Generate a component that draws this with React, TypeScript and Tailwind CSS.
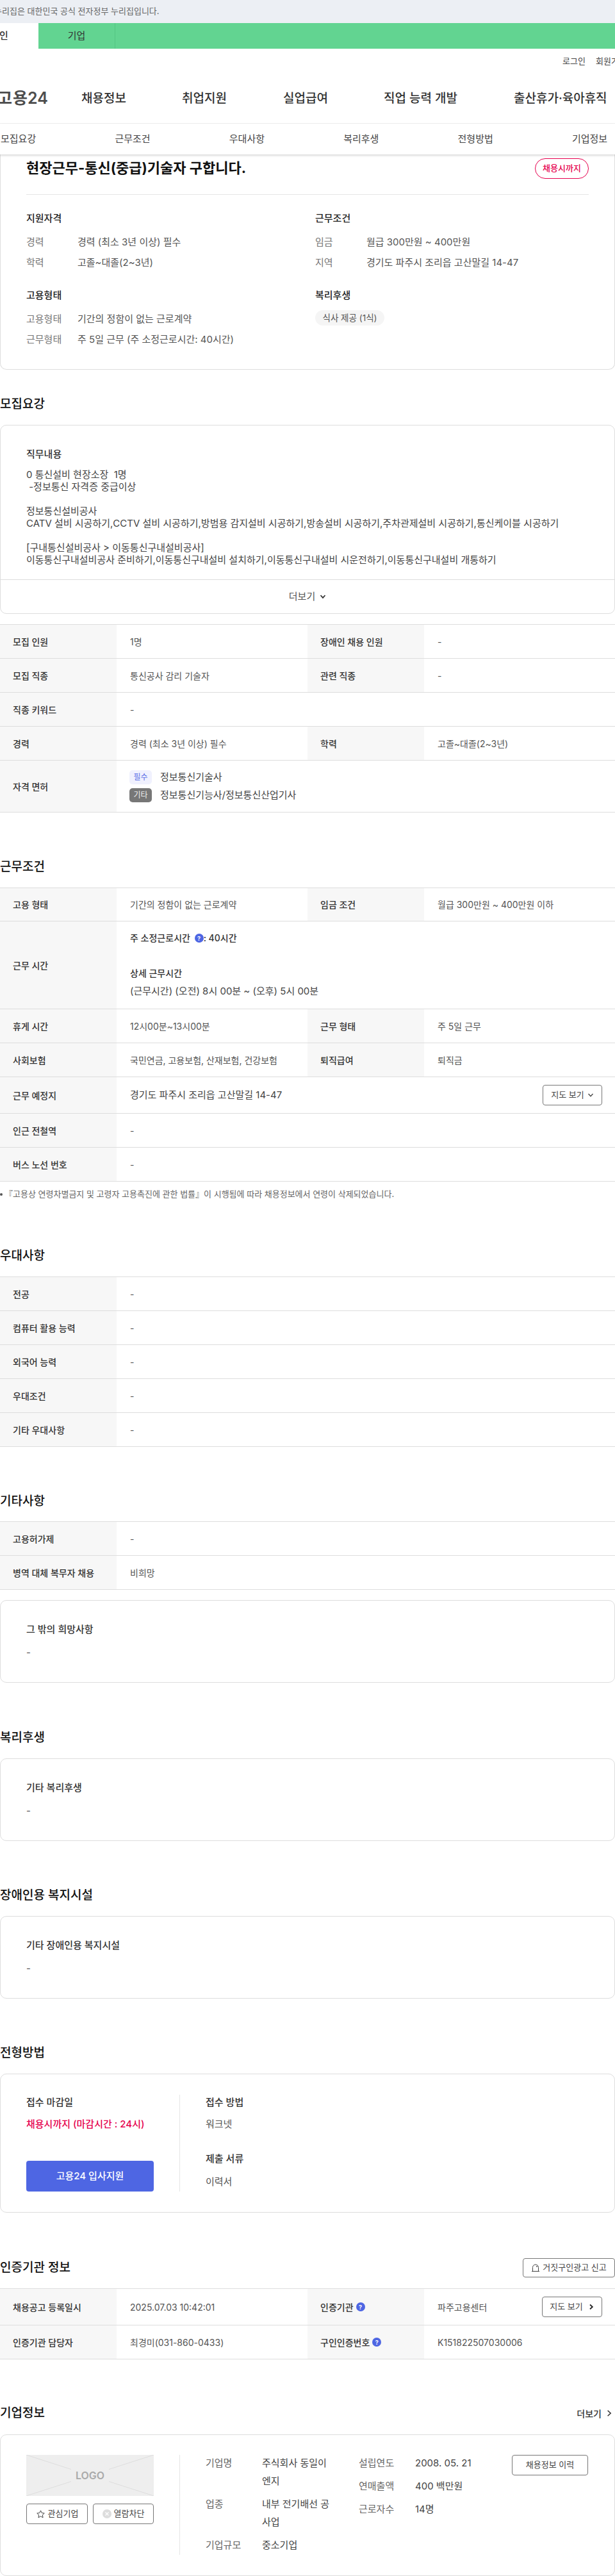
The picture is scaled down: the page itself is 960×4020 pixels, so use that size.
import React from "react";

const Q = () => (
  <span className="inline-flex h-[14px] w-[14px] items-center justify-center rounded-full bg-[#4e66e3] text-[9px] font-bold leading-none text-white">?</span>
);

const Chev = ({ dir = "down", cls = "", sw = 1.3, size = 10 }: { dir?: "down" | "right"; cls?: string; sw?: number; size?: number }) => (
  <svg width={size} height={size} viewBox="0 0 10 10" fill="none" stroke="currentColor" strokeWidth={sw} className={cls}>
    {dir === "down" ? <path d="M1.5 3 5 6.8 8.5 3" /> : <path d="M3 1.5 6.8 5 3 8.5" />}
  </svg>
);

const Label = ({ children }: { children: React.ReactNode }) => (
  <div className="flex w-[182px] shrink-0 items-center bg-[#f7f7f7] pl-[20px] text-[14px] font-medium text-[#333]">{children}</div>
);

const Val = ({ children, cls = "" }: { children?: React.ReactNode; cls?: string }) => (
  <div className={`flex items-center pl-[21px] text-[14px] text-[#555] ${cls}`}>{children}</div>
);

const Row2 = ({ a, b, c, d, h = "h-[53px]" }: { a: string; b: React.ReactNode; c: React.ReactNode; d: React.ReactNode; h?: string }) => (
  <div className={`flex border-b border-[#ddd] ${h}`}>
    <Label>{a}</Label>
    <Val cls="w-[298px]">{b}</Val>
    <Label>{c}</Label>
    <Val cls="flex-1">{d}</Val>
  </div>
);

const Row1 = ({ a, b, h = "h-[53px]" }: { a: string; b: React.ReactNode; h?: string }) => (
  <div className={`flex border-b border-[#ddd] ${h}`}>
    <Label>{a}</Label>
    <Val cls="flex-1">{b}</Val>
  </div>
);

const Heading = ({ children, cls = "" }: { children: React.ReactNode; cls?: string }) => (
  <h2 className={`text-[19px] leading-[32px] font-medium text-[#111] ${cls}`}>{children}</h2>
);

const NoteCard = ({ title }: { title: string }) => (
  <div className="h-[129px] rounded-[10px] border border-[#ddd] px-[40px] pt-[33px]">
    <div className="text-[15px] leading-[24px] font-medium text-[#333]">{title}</div>
    <div className="mt-[12px] text-[15px] leading-[24px] text-[#555]">-</div>
  </div>
);

const SumRow = ({ k, v, cls = "" }: { k: string; v: string; cls?: string }) => (
  <div className={`flex h-[32px] items-center text-[15px] text-[#555] ${cls}`}>
    <span className="w-[80px] text-[#777]">{k}</span>
    {v}
  </div>
);

const Info = ({ k, v, cls = "" }: { k: string; v: string; cls?: string }) => (
  <div className={`flex ${cls}`}>
    <span className="w-[88px] shrink-0 text-[#666]">{k}</span>
    <span className="w-[110px] break-all text-[#444]">{v}</span>
  </div>
);

export default function App() {
  return (
    <div className="h-[4020px] w-[960px] overflow-hidden bg-white font-['Inter','Noto_Sans_CJK_KR',sans-serif] text-[#333]">
      <div className="flex h-[36px] items-center whitespace-nowrap bg-[#eceff4] text-[13px] text-[#666]">
        <span className="ml-[-9px]">누리집은 대한민국 공식 전자정부 누리집입니다.</span>
      </div>
      <div className="flex h-[40px] bg-[#62d491] text-[15px] text-[#333]">
        <div className="flex w-[60px] items-center bg-white">
          <span className="ml-[-1px] font-medium">인</span>
        </div>
        <div className="flex w-[120px] items-center justify-center border-r border-[#55c584]">기업</div>
      </div>
      <div className="flex h-[40px] items-center overflow-hidden whitespace-nowrap pl-[878px] text-[13px] text-[#444]">
        <span className="w-[52px] shrink-0">로그인</span>
        <span className="shrink-0">회원가입</span>
      </div>
      <div className="flex h-[77px] items-center whitespace-nowrap border-b border-[#eee] text-[19px] font-medium text-[#333]">
        <span className="ml-[-4px] w-[131px] shrink-0 text-[25px] font-semibold text-[#4d4d4d]">
          <span className="tracking-[1px]">고</span>용24
        </span>
        <span className="w-[157px] shrink-0">채용정보</span>
        <span className="w-[158px] shrink-0">취업지원</span>
        <span className="w-[157px] shrink-0">실업급여</span>
        <span className="w-[203px] shrink-0">직업 능력 개발</span>
        <span className="shrink-0">출산휴가·육아휴직</span>
      </div>
      <div className="relative z-10 flex h-[48px] items-center whitespace-nowrap bg-white pl-[1px] text-[15px] text-[#444] shadow-[0_2px_3px_rgba(0,0,0,0.15)]">
        {["모집요강", "근무조건", "우대사항", "복리후생", "전형방법", "기업정보"].map((t) => (
          <span key={t} className="w-[178.4px] shrink-0">{t}</span>
        ))}
      </div>

      <div className="h-[336px] rounded-b-[10px] border border-t-0 border-[#ddd] px-[40px]">
        <div className="flex h-[63px] items-start justify-between border-b border-[#e5e5e5]">
          <h1 className="text-[22px] leading-[42px] font-bold text-[#111]">현장근무-통신(중급)기술자 구합니다.</h1>
          <span className="mt-[6px] flex h-[32px] w-[84px] items-center justify-center rounded-full border border-[#e6004e] text-[13px] font-medium text-[#e6004e]">채용시까지</span>
        </div>
        <div className="grid grid-cols-[451px_1fr]">
          <div>
            <div className="mt-[25px] text-[15px] leading-[24px] font-medium text-[#222]">지원자격</div>
            <SumRow k="경력" v="경력 (최소 3년 이상) 필수" cls="mt-[9px]" />
            <SumRow k="학력" v="고졸~대졸(2~3년)" />
            <div className="mt-[23px] text-[15px] leading-[24px] font-medium text-[#222]">고용형태</div>
            <SumRow k="고용형태" v="기간의 정함이 없는 근로계약" cls="mt-[9px]" />
            <SumRow k="근무형태" v="주 5일 근무 (주 소정근로시간: 40시간)" />
          </div>
          <div>
            <div className="mt-[25px] text-[15px] leading-[24px] font-medium text-[#222]">근무조건</div>
            <SumRow k="임금" v="월급 300만원 ~ 400만원" cls="mt-[9px]" />
            <SumRow k="지역" v="경기도 파주시 조리읍 고산말길 14-47" />
            <div className="mt-[23px] text-[15px] leading-[24px] font-medium text-[#222]">복리후생</div>
            <span className="mt-[11px] flex h-[24px] w-[108px] items-center justify-center rounded-full bg-[#f5f5f5] text-[13.5px] text-[#555]">식사 제공 (1식)</span>
          </div>
        </div>
      </div>

      <Heading cls="mt-[38px]">모집요강</Heading>
      <div className="mt-[16px] h-[295px] rounded-[10px] border border-[#ddd]">
        <div className="h-[240px] px-[40px] pt-[33px]">
          <div className="text-[15px] leading-[24px] font-medium text-[#333]">직무내용</div>
          <div className="mt-[10px] whitespace-pre-wrap text-[15px] leading-[19px] text-[#444]">
{`0 통신설비 현장소장  1명
 -정보통신 자격증 중급이상

정보통신설비공사
CATV 설비 시공하기,CCTV 설비 시공하기,방범용 감지설비 시공하기,방송설비 시공하기,주차관제설비 시공하기,통신케이블 시공하기

[구내통신설비공사 > 이동통신구내설비공사]
이동통신구내설비공사 준비하기,이동통신구내설비 설치하기,이동통신구내설비 시운전하기,이동통신구내설비 개통하기`}
          </div>
        </div>
        <div className="flex h-[53px] items-center justify-center gap-[7px] border-t border-[#ddd] text-[15px] text-[#555]">
          더보기 <Chev cls="text-[#333]" sw={1.8} />
        </div>
      </div>

      <div className="mt-[16px] border-t border-[#ddd]">
        <Row2 a="모집 인원" b="1명" c="장애인 채용 인원" d="-" />
        <Row2 a="모집 직종" b="통신공사 감리 기술자" c="관련 직종" d="-" />
        <Row1 a="직종 키워드" b="-" />
        <Row2 a="경력" b="경력 (최소 3년 이상) 필수" c="학력" d="고졸~대졸(2~3년)" />
        <div className="flex h-[81px] border-b border-[#ddd]">
          <Label>자격 면허</Label>
          <div className="flex flex-col justify-center gap-[6px] pl-[20px] text-[15px] text-[#444]">
            <div className="flex items-center gap-[13px]">
              <span className="flex h-[22px] w-[35px] items-center justify-center rounded-[5px] bg-[#f0f1fe] text-[12px] text-[#5a6fe6]">필수</span>
              정보통신기술사
            </div>
            <div className="flex items-center gap-[13px]">
              <span className="flex h-[22px] w-[35px] items-center justify-center rounded-[5px] bg-[#777] text-[12px] text-[#eee]">기타</span>
              정보통신기능사/정보통신산업기사
            </div>
          </div>
        </div>
      </div>

      <Heading cls="mt-[69px]">근무조건</Heading>
      <div className="mt-[16px] border-t border-[#ddd]">
        <Row2 h="h-[52px]" a="고용 형태" b="기간의 정함이 없는 근로계약" c="임금 조건" d="월급 300만원 ~ 400만원 이하" />
        <div className="flex h-[137px] border-b border-[#ddd]">
          <Label>근무 시간</Label>
          <div className="pl-[21px] pt-[13px] text-[15px] leading-[26px] text-[#444]">
            <div className="flex items-center text-[14px] font-medium text-[#333]">
              <span className="whitespace-pre">주 소정근로시간 </span>
              <span className="ml-[3px] flex"><Q /></span>
              : 40시간
            </div>
            <div className="mt-[29px] text-[14px] font-medium text-[#333]">상세 근무시간</div>
            <div className="mt-[2px]">(근무시간) (오전) 8시 00분 ~ (오후) 5시 00분</div>
          </div>
        </div>
        <Row2 a="휴게 시간" b="12시00분~13시00분" c="근무 형태" d="주 5일 근무" />
        <Row2 a="사회보험" b="국민연금, 고용보험, 산재보험, 건강보험" c="퇴직급여" d="퇴직금" />
        <div className="flex h-[57px] border-b border-[#ddd]">
          <Label>근무 예정지</Label>
          <div className="flex flex-1 items-center justify-between pl-[21px] pr-[20px] text-[15px] text-[#444]">
            경기도 파주시 조리읍 고산말길 14-47
            <button className="flex h-[32px] w-[93px] items-center justify-center gap-[5px] rounded-[4px] border border-[#777] text-[13px] text-[#444]">지도 보기 <Chev /></button>
          </div>
        </div>
        <Row1 a="인근 전철역" b="-" />
        <Row1 a="버스 노선 번호" b="-" />
      </div>
      <div className="mt-[8px] flex h-[24px] items-center whitespace-nowrap text-[13px] text-[#666]">
        <span className="mr-[3px] h-[4px] w-[4px] rounded-full bg-[#555]" />
        『고용상 연령차별금지 및 고령자 고용촉진에 관한 법률』이 시행됨에 따라 채용정보에서 연령이 삭제되었습니다.
      </div>

      <Heading cls="mt-[68px]">우대사항</Heading>
      <div className="mt-[16px] border-t border-[#ddd]">
        <Row1 a="전공" b="-" />
        <Row1 a="컴퓨터 활용 능력" b="-" />
        <Row1 a="외국어 능력" b="-" />
        <Row1 a="우대조건" b="-" />
        <Row1 a="기타 우대사항" b="-" />
      </div>

      <Heading cls="mt-[69px]">기타사항</Heading>
      <div className="mt-[15px] border-t border-[#ddd]">
        <Row1 a="고용허가제" b="-" />
        <Row1 a="병역 대체 복무자 채용" b="비희망" />
      </div>
      <div className="mt-[16px]"><NoteCard title="그 밖의 희망사항" /></div>

      <Heading cls="mt-[70px]">복리후생</Heading>
      <div className="mt-[16px]"><NoteCard title="기타 복리후생" /></div>
      <Heading cls="mt-[69px]">장애인용 복지시설</Heading>
      <div className="mt-[16px]"><NoteCard title="기타 장애인용 복지시설" /></div>

      <Heading cls="mt-[69px]">전형방법</Heading>
      <div className="mt-[16px] flex h-[217px] rounded-[10px] border border-[#ddd] px-[40px] pt-[32px]">
        <div className="h-[151px] w-[240px] border-r border-[#e5e5e5]">
          <div className="text-[15px] leading-[24px] font-medium text-[#333]">접수 마감일</div>
          <div className="mt-[10px] text-[15px] leading-[24px] font-medium text-[#e6004e]">채용시까지 (마감시간 : 24시)</div>
          <button className="mt-[45px] h-[48px] w-[199px] rounded-[4px] bg-[#4e66e3] text-[15px] font-medium text-white">고용24 입사지원</button>
        </div>
        <div className="pl-[40px]">
          <div className="text-[15px] leading-[24px] font-medium text-[#333]">접수 방법</div>
          <div className="mt-[10px] text-[15px] leading-[24px] text-[#555]">워크넷</div>
          <div className="mt-[30px] text-[15px] leading-[24px] font-medium text-[#333]">제출 서류</div>
          <div className="mt-[12px] text-[15px] leading-[24px] text-[#555]">이력서</div>
        </div>
      </div>

      <div className="mt-[71px] flex h-[30px] items-center justify-between">
        <Heading>인증기관 정보</Heading>
        <button className="flex h-[30px] w-[144px] items-center justify-center gap-[4px] rounded-[4px] border border-[#777] text-[13px] text-[#444]">
          <svg width="14" height="14" viewBox="0 0 14 14" fill="none" stroke="#444" strokeWidth="1">
            <path d="M2.5 12.5V6.5a4.5 4.5 0 0 1 9 0v6M1 12.5h12" />
            <circle cx="9" cy="5" r="0.5" fill="#444" />
          </svg>
          거짓구인광고 신고
        </button>
      </div>
      <div className="mt-[17px] border-t border-[#ddd]">
        <div className="flex h-[57px] border-b border-[#ddd]">
          <Label>채용공고 등록일시</Label>
          <Val cls="w-[298px]">2025.07.03 10:42:01</Val>
          <Label><span className="mr-[4px]">인증기관</span><Q /></Label>
          <div className="flex flex-1 items-center justify-between pl-[21px] pr-[20px] text-[14px] text-[#555]">
            파주고용센터
            <button className="flex h-[32px] w-[94px] items-center justify-center gap-[8px] rounded-[4px] border border-[#777] text-[13px] text-[#444]">지도 보기 <Chev dir="right" cls="text-[#222]" sw={1.8} /></button>
          </div>
        </div>
        <div className="flex h-[53px] border-b border-[#ddd]">
          <Label>인증기관 담당자</Label>
          <Val cls="w-[298px]">최경미(031-860-0433)</Val>
          <Label><span className="mr-[4px]">구인인증번호</span><Q /></Label>
          <Val cls="flex-1">K151822507030006</Val>
        </div>
      </div>

      <div className="mt-[68px] flex h-[32px] items-center justify-between">
        <Heading>기업정보</Heading>
        <div className="flex items-center gap-[6px] pr-[3px] text-[14px] font-medium text-[#333]">더보기 <Chev dir="right" size={12} /></div>
      </div>
      <div className="mt-[17px] flex h-[221px] rounded-[10px] border border-[#ddd] px-[40px] pt-[31px]">
        <div className="h-[156px] w-[240px] shrink-0 border-r border-[#e5e5e5]">
          <div className="relative flex h-[64px] w-[199px] items-center justify-center bg-[#eee]">
            <svg className="absolute inset-0" width="199" height="64" viewBox="0 0 199 64" stroke="#ddd" fill="none"><path d="M0 0 199 64M199 0 0 64" /></svg>
            <span className="relative bg-[#eee] px-[7px] text-[16px] leading-[24px] font-semibold text-[#aaa]">LOGO</span>
          </div>
          <div className="mt-[12px] flex w-[199px] justify-between">
            <button className="flex h-[32px] w-[96px] items-center justify-center gap-[4px] rounded-[4px] border border-[#777] text-[13px] text-[#444]">
              <svg width="15" height="15" viewBox="0 0 24 24" fill="none" stroke="#444" strokeWidth="1.6"><path d="m12 3 2.8 5.9 6.4.8-4.7 4.4 1.2 6.4L12 17.4l-5.7 3.1 1.2-6.4-4.7-4.4 6.4-.8z" /></svg>
              관심기업
            </button>
            <button className="flex h-[32px] w-[95px] items-center justify-center gap-[4px] rounded-[4px] border border-[#777] text-[13px] text-[#444]">
              <svg width="14" height="14" viewBox="0 0 14 14"><circle cx="7" cy="7" r="7" fill="#ddd" /><path d="m4.5 4.5 5 5m0-5-5 5" stroke="#fff" strokeWidth="1.2" /></svg>
              열람차단
            </button>
          </div>
        </div>
        <div className="-mt-[1px] ml-[40px] w-[239px] shrink-0 text-[15px] leading-[28px]">
          <Info k="기업명" v="주식회사 동일이엔지" />
          <Info k="업종" v="내부 전기배선 공사업" cls="mt-[8px]" />
          <Info k="기업규모" v="중소기업" cls="mt-[8px]" />
        </div>
        <div className="-mt-[1px] w-[239px] shrink-0 text-[15px] leading-[28px]">
          <Info k="설립연도" v="2008. 05. 21" />
          <Info k="연매출액" v="400 백만원" cls="mt-[8px]" />
          <Info k="근로자수" v="14명" cls="mt-[8px]" />
        </div>
        <button className="h-[32px] w-[119px] shrink-0 rounded-[4px] border border-[#777] text-[13px] text-[#444]">채용정보 이력</button>
      </div>
    </div>
  );
}
